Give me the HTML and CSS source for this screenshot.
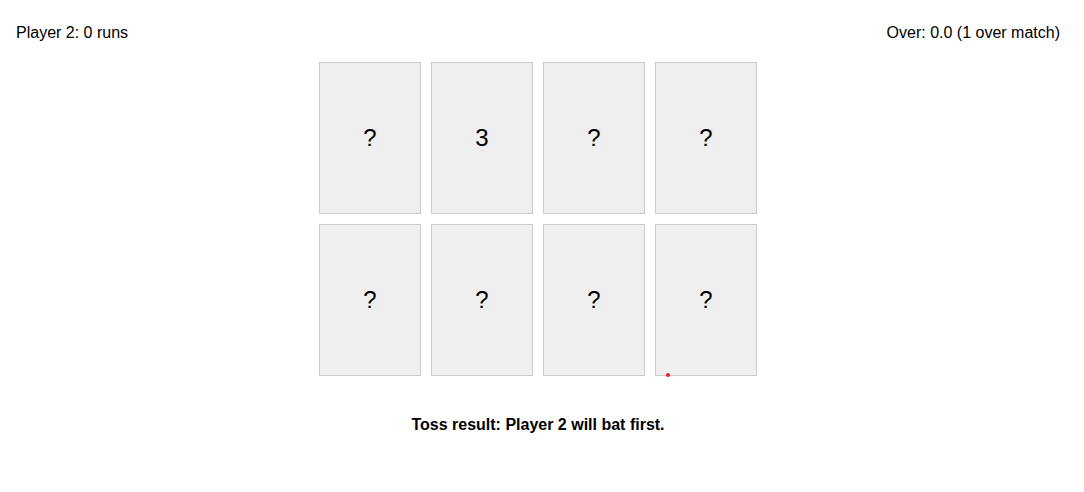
FILE: index.html
```html
<!DOCTYPE html>
<html lang="en">
<head>
<meta charset="utf-8">
<title>Card Cricket</title>
<link rel="stylesheet" href="styles.css">
</head>
<body>
<header class="scoreboard">
  <div class="score">Player 2: 0 runs</div>
  <div class="over">Over: 0.0 (1 over match)</div>
</header>
<main class="game">
  <div class="cards">
    <button class="card" type="button">?</button>
    <button class="card" type="button">3</button>
    <button class="card" type="button">?</button>
    <button class="card" type="button">?</button>
    <button class="card" type="button">?</button>
    <button class="card" type="button">?</button>
    <button class="card" type="button">?</button>
    <button class="card card-marked" type="button">?</button>
  </div>
  <p class="result">Toss result: Player 2 will bat first.</p>
</main>
</body>
</html>
```
FILE: styles.css
```css
body {
  margin: 0;
  padding: 24px 24px 24px 16px;
  background: #fff;
  color: #000;
  font-family: "Liberation Sans", Arial, sans-serif;
  font-size: 16px;
  line-height: 18px;
}

.scoreboard {
  display: flex;
  justify-content: space-between;
  margin-bottom: 20px;
}

.game {
  display: flex;
  flex-direction: column;
  align-items: center;
}

.cards {
  display: grid;
  grid-template-columns: repeat(4, 102px);
  gap: 10px;
}

.card {
  position: relative;
  height: 152px;
  padding: 0;
  border: 1px solid #ccc;
  border-radius: 0;
  background: #efefef;
  color: #000;
  font-family: inherit;
  font-size: 24px;
  cursor: pointer;
}

.card-marked::after {
  content: "";
  position: absolute;
  bottom: -2px;
  left: 10px;
  width: 4px;
  height: 4px;
  border-radius: 50%;
  background: #ed1c24;
}

.result {
  margin: 40px 0 0;
  font-weight: bold;
}
```
